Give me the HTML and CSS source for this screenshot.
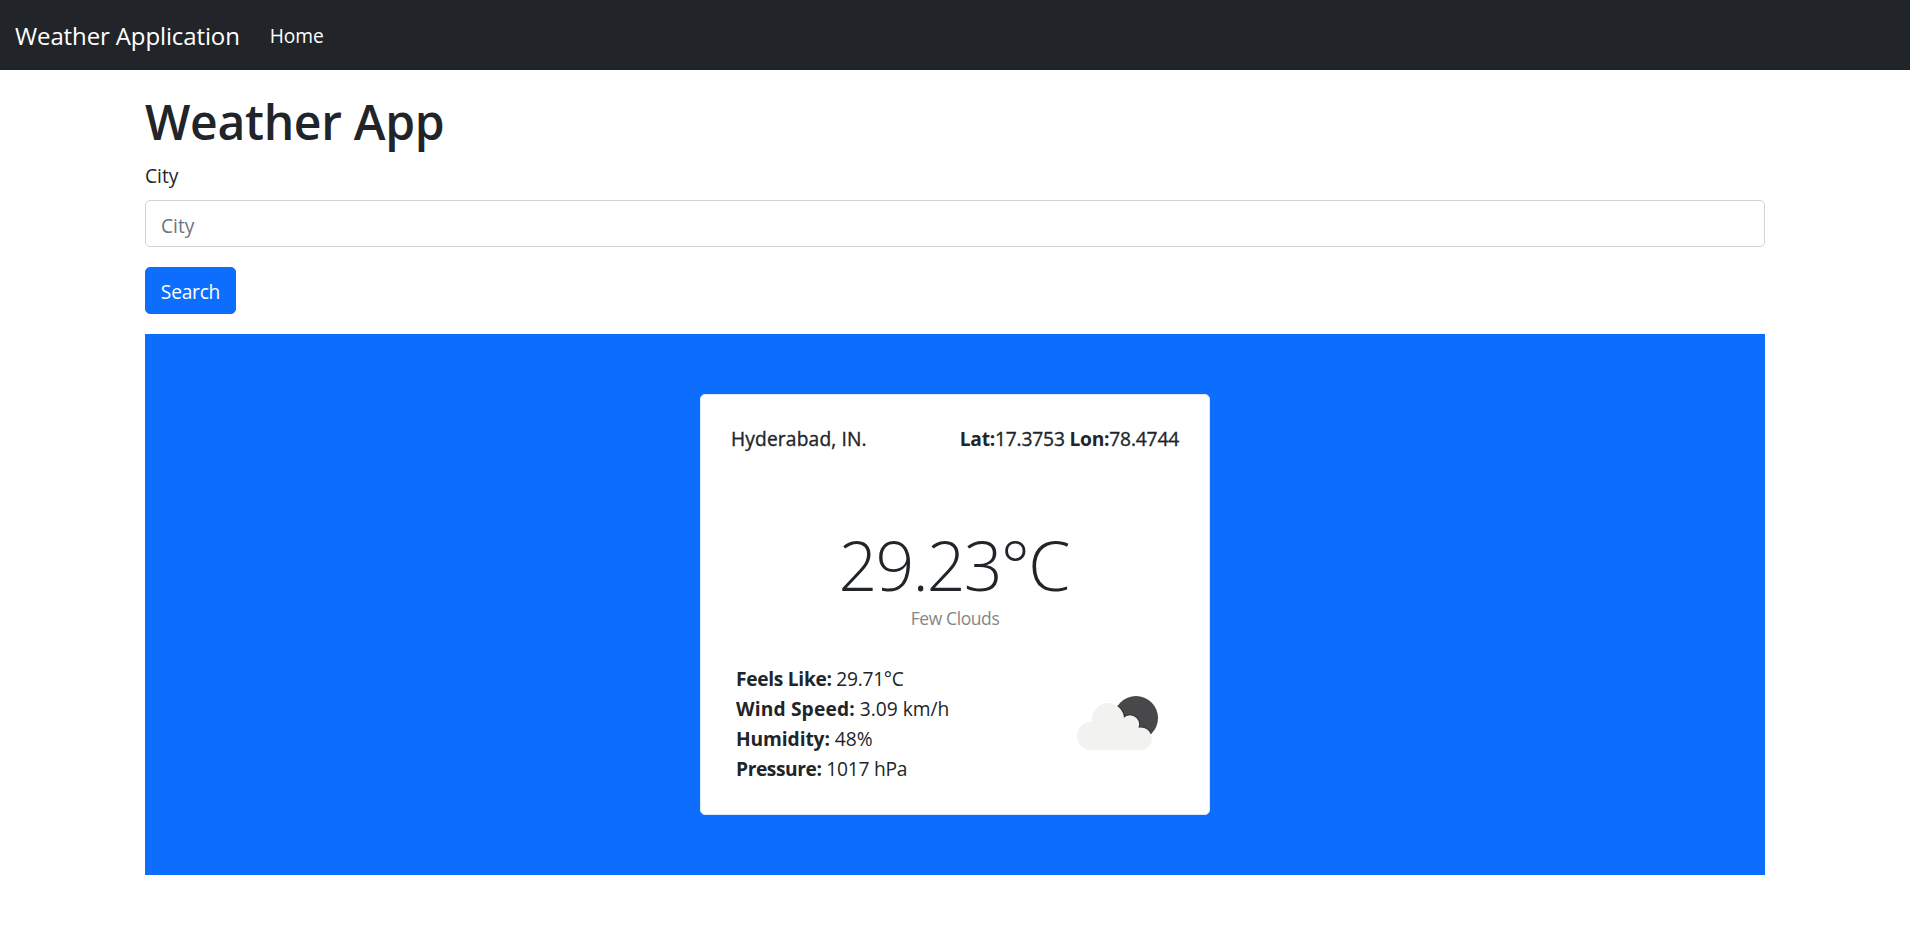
FILE: index.html
```html
<!DOCTYPE html>
<html lang="en">
<head>
<meta charset="utf-8">
<title>Weather Application</title>
<link rel="stylesheet" href="styles.css">
</head>
<body>
<nav class="navbar">
  <a class="brand">Weather Application</a>
  <a class="nav-link">Home</a>
</nav>
<main class="container">
  <h1 class="title">Weather App</h1>
  <form class="search">
    <label class="label" for="city">City</label>
    <input class="input" id="city" type="text" placeholder="City">
    <button class="button" type="button">Search</button>
  </form>
  <section class="panel">
    <article class="card">
      <header class="card-head">
        <h6 class="place">Hyderabad, IN.</h6>
        <h6 class="coords"><b>Lat:</b>17.3753 <b>Lon:</b>78.4744</h6>
      </header>
      <div class="current">
        <div class="temp">29.23°C</div>
        <div class="summary">Few Clouds</div>
      </div>
      <div class="details">
        <div class="stats">
          <div class="stat feels"><b>Feels Like:</b> 29.71°C</div>
          <div class="stat wind"><b>Wind Speed:</b> 3.09 km/h</div>
          <div class="stat humidity"><b>Humidity:</b> 48%</div>
          <div class="stat pressure"><b>Pressure:</b> 1017 hPa</div>
        </div>
        <svg class="icon" viewBox="0 0 84 58" aria-hidden="true">
          <clipPath id="moon"><circle cx="61" cy="24" r="22"/></clipPath>
          <circle cx="61" cy="24" r="22" fill="#48484a"/>
          <g clip-path="url(#moon)" fill="#303032">
            <circle cx="33" cy="25" r="17"/>
            <circle cx="55" cy="30.5" r="10.2"/>
            <circle cx="65.5" cy="44.7" r="12.3"/>
          </g>
          <g fill="#f2f2f1">
            <circle cx="16" cy="42" r="14"/>
            <circle cx="33" cy="25" r="16"/>
            <circle cx="55" cy="30.5" r="9.2"/>
            <circle cx="65.5" cy="44.7" r="11.3"/>
            <path d="M16 30h36l13 6v20H16z"/>
          </g>
        </svg>
      </div>
    </article>
  </section>
</main>
</body>
</html>
```
FILE: styles.css
```css
*{box-sizing:border-box}
body{margin:0;background:#fff;color:#212529;font:400 19.2px/30px "Open Sans","Noto Sans",sans-serif}
.navbar{height:70px;padding:2px 15px 0;display:flex;align-items:center;gap:30px;background:#212529;color:#fff}
.brand{font-size:24px;letter-spacing:-.12px}
.nav-link{letter-spacing:-.1px}
.container{width:1620px;margin:0 auto;padding-top:22px}
.title{margin:0 0 9px;font-size:48px;line-height:60px;font-weight:600;letter-spacing:-.3px}
.search{display:flex;flex-direction:column;align-items:flex-start}
.label{height:30px;margin-bottom:9px}
.input{width:100%;height:47px;padding:3px 15px 0;border:1px solid #ced4da;border-radius:5px;background:#fff;font:inherit}
.input::placeholder{color:#6c757d;opacity:1}
.button{height:47px;margin:20px 0;padding:3px 0 0;border:1px solid #0d6efd;border-radius:5px;background:#0d6efd;color:#fff;font:inherit;letter-spacing:-.25px;width:91px}
.panel{height:541px;padding-top:60px;background:#0d6efd;display:flex;justify-content:center;align-items:flex-start}
.card{width:510px;height:421px;padding:32px 30px 30px;border:1px solid #dbe8fb;border-radius:5px;background:#fff}
.card-head{display:flex;justify-content:space-between;height:24px}
.place,.coords{margin:0;font-size:19.2px;line-height:24px;font-weight:400;-webkit-text-stroke:.35px #212529}
.place{letter-spacing:.15px}
.coords{letter-spacing:-.17px}
.coords b{letter-spacing:-.25px;-webkit-text-stroke:0}
.current{margin-top:73px;text-align:center}
.temp{padding-right:3px;font-size:68px;line-height:82px;font-weight:300;letter-spacing:-1.8px}
.summary{font-size:17.5px;line-height:24px;letter-spacing:-.4px;color:#868686}
.details{display:flex;justify-content:space-between;padding:0 20px 0 5px;margin-top:34px}
.feels{letter-spacing:-.3px}
.wind b{letter-spacing:.15px}
.humidity b{letter-spacing:-.1px}
.pressure{letter-spacing:-.25px}
.pressure b{letter-spacing:-.42px}
.icon{width:84px;height:58px;margin-top:30px}
```
